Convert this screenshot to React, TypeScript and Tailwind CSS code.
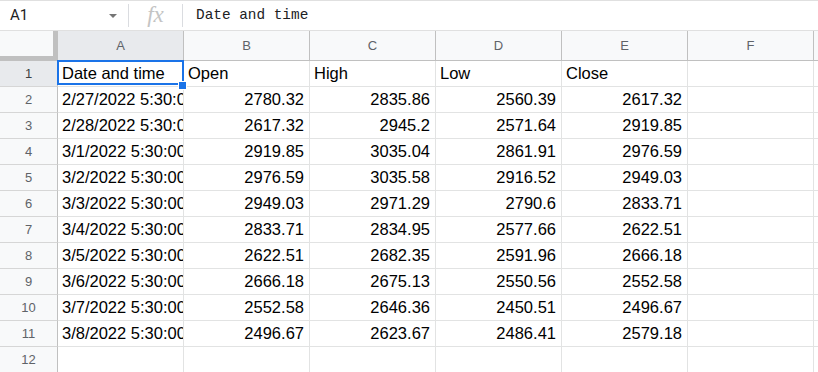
import React from "react";

const columns = ["A", "B", "C", "D", "E", "F"];

const rows: [string, string, string, string, string][] = [
  ["2/27/2022 5:30:00", "2780.32", "2835.86", "2560.39", "2617.32"],
  ["2/28/2022 5:30:00", "2617.32", "2945.2", "2571.64", "2919.85"],
  ["3/1/2022 5:30:00", "2919.85", "3035.04", "2861.91", "2976.59"],
  ["3/2/2022 5:30:00", "2976.59", "3035.58", "2916.52", "2949.03"],
  ["3/3/2022 5:30:00", "2949.03", "2971.29", "2790.6", "2833.71"],
  ["3/4/2022 5:30:00", "2833.71", "2834.95", "2577.66", "2622.51"],
  ["3/5/2022 5:30:00", "2622.51", "2682.35", "2591.96", "2666.18"],
  ["3/6/2022 5:30:00", "2666.18", "2675.13", "2550.56", "2552.58"],
  ["3/7/2022 5:30:00", "2552.58", "2646.36", "2450.51", "2496.67"],
  ["3/8/2022 5:30:00", "2496.67", "2623.67", "2486.41", "2579.18"],
];

const cell =
  "w-[126px] shrink-0 h-full border-r border-[#e2e3e3] overflow-hidden whitespace-nowrap px-[4px] flex items-center";

function RowHeader({ n, active }: { n: number; active?: boolean }) {
  return (
    <div
      className={
        "w-[58px] shrink-0 h-full border-r border-b border-r-[#c0c0c0] border-b-[#d6d6d6] flex items-center justify-center text-[13px] " +
        (active ? "bg-[#e8eaed] text-[#3c4043]" : "bg-[#f8f9fa] text-[#5f6368]")
      }
    >
      {n}
    </div>
  );
}

export default function App() {
  return (
    <div className="w-[818px] h-[372px] overflow-hidden bg-white font-['Liberation_Sans',Arial,sans-serif]">
      {/* formula bar */}
      <div className="h-[31px] border-y border-[#e0e0e0] flex items-center">
        <div className="w-[128px] h-full flex items-center justify-between pl-[10px] pr-[11px]">
          <span className="font-['Roboto',sans-serif] text-[15px] text-[#202124]">A1</span>
          <span className="w-0 h-0 border-l-[4px] border-r-[4px] border-t-[4px] border-l-transparent border-r-transparent border-t-[#757575]" />
        </div>
        <div className="w-px h-[23px] bg-[#dadce0]" />
        <div className="w-[53px] h-full flex items-center justify-center">
          <span className="font-['Liberation_Serif',serif] italic text-[23px] leading-none text-[#c4c4c4] -mt-[3px]">
            fx
          </span>
        </div>
        <div className="w-px h-[23px] bg-[#dadce0]" />
        <div className="pl-[13px] font-['Liberation_Mono',monospace] text-[14.4px] text-[#202124]">
          Date and time
        </div>
      </div>

      {/* column headers */}
      <div className="flex h-[30px]">
        <div className="w-[58px] shrink-0 h-full bg-[#f8f9fa] border-r-[5px] border-b-[5px] border-[#c0c0c0]" />
        {columns.map((c, i) => (
          <div
            key={c}
            className={
              "w-[126px] shrink-0 h-full border-r border-b border-[#c0c0c0] flex items-center justify-center text-[13px] text-[#5f6368] " +
              (i === 0 ? "bg-[#e8eaed]" : "bg-[#f8f9fa]")
            }
          >
            {c}
          </div>
        ))}
        <div className="flex-1 h-full bg-[#f8f9fa] border-b border-[#c0c0c0]" />
      </div>

      {/* row 1 */}
      <div className="flex h-[26px] text-[16.5px] text-black">
        <RowHeader n={1} active />
        <div className="relative w-[126px] shrink-0 h-full border-r border-b border-[#e2e3e3] px-[4px] flex items-center whitespace-nowrap">
          Date and time
          <div className="absolute -left-px -top-px w-[127px] h-[25px] border-2 border-[#1a73e8]" />
          <div className="absolute left-[121px] top-[21px] w-[7px] h-[7px] bg-[#1a73e8] border border-white box-content -ml-px -mt-px" />
        </div>
        {["Open", "High", "Low", "Close", ""].map((h, i) => (
          <div key={i} className={cell + " border-b"}>
            {h}
          </div>
        ))}
        <div className="flex-1 h-full border-b border-[#e2e3e3]" />
      </div>

      {/* data rows */}
      {rows.map((r, ri) => (
        <div key={ri} className="flex h-[26px] text-[16.5px] text-black">
          <RowHeader n={ri + 2} />
          <div className={cell + " border-b"}>{r[0]}</div>
          {r.slice(1).map((v, i) => (
            <div key={i} className={cell + " border-b justify-end pr-[5px]"}>
              {v}
            </div>
          ))}
          <div className={cell + " border-b"} />
          <div className="flex-1 h-full border-b border-[#e2e3e3]" />
        </div>
      ))}

      {/* row 12 */}
      <div className="flex h-[26px]">
        <RowHeader n={12} />
        {columns.map((c) => (
          <div key={c} className={cell + " border-b"} />
        ))}
        <div className="flex-1 h-full border-b border-[#e2e3e3]" />
      </div>
    </div>
  );
}
